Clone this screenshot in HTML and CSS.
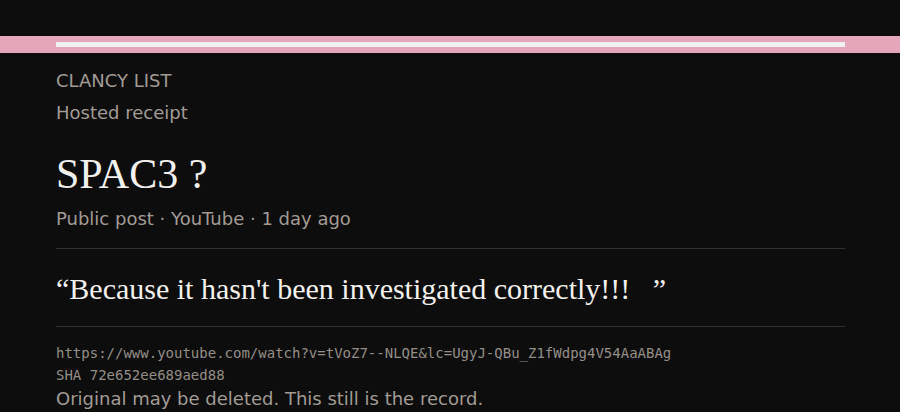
FILE: index.html
```html
<!DOCTYPE html>
<html lang="en">
<head>
<meta charset="utf-8">
<title>SPAC3 ? — Clancy List</title>
<link rel="stylesheet" href="styles.css">
</head>
<body>
<div class="topbar"><div class="topbar-fill"></div></div>
<main class="page">
  <div class="brand">CLANCY LIST</div>
  <div class="kind">Hosted receipt</div>
  <h1 class="title">SPAC3 ?</h1>
  <div class="meta">Public post · YouTube · 1 day ago</div>
  <hr class="rule">
  <blockquote class="quote">“Because it hasn't been investigated correctly!!!&nbsp;&nbsp; ”</blockquote>
  <hr class="rule rule-after">
  <div class="mono mono-first">https://www.youtube.com/watch?v=tVoZ7--NLQE&amp;lc=UgyJ-QBu_Z1fWdpg4V54AaABAg</div>
  <div class="mono">SHA 72e652ee689aed88</div>
  <div class="note">Original may be deleted. This still is the record.</div>
</main>
</body>
</html>
```
FILE: styles.css
```css
html, body {
  margin: 0;
  padding: 0;
  background: #0d0d0d;
}
body {
  font-family: "DejaVu Sans", sans-serif;
  color: #a19b94;
  padding-top: 36px;
}
.topbar {
  background: #e6a6b9;
  padding: 6px 55px 6px 56px;
}
.topbar-fill {
  height: 5px;
  background: #f0f0f0;
}
.page {
  padding: 0 55px 0 56px;
}
.brand {
  font-size: 18px;
  line-height: 24px;
  margin-top: 16px;
}
.kind {
  font-size: 18px;
  line-height: 24px;
  margin-top: 8px;
}
.title {
  font-family: "Liberation Serif", serif;
  font-weight: normal;
  font-size: 42px;
  line-height: 48px;
  color: #f3f1ed;
  margin: 25px 0 0;
}
.meta {
  font-size: 18px;
  line-height: 24px;
  margin-top: 9px;
}
.rule {
  border: 0;
  border-top: 1px solid #2f2f2f;
  margin: 17px 0 0;
  height: 0;
}
.rule-after {
  margin-top: 0;
}
.quote {
  font-family: "Liberation Serif", serif;
  font-size: 30px;
  line-height: 36px;
  color: #f3f1ed;
  margin: 22px 0 19px;
}
.mono {
  font-family: "DejaVu Sans Mono", monospace;
  font-size: 14px;
  line-height: 22px;
  color: #948e87;
}
.mono-first {
  margin-top: 15px;
}
.note {
  font-size: 18px;
  line-height: 24px;
  margin-top: 1px;
}
```
